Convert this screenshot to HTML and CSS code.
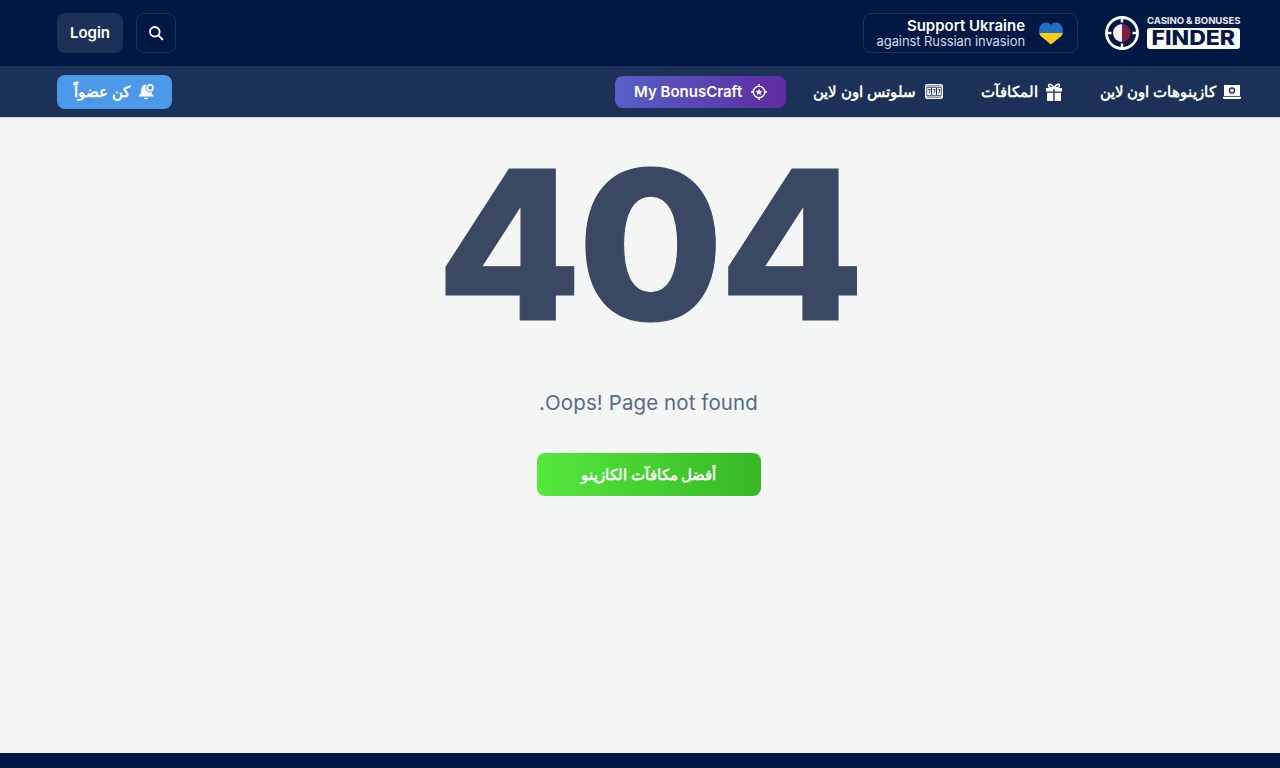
FILE: index.html
```html
<!DOCTYPE html>
<html lang="ar" dir="rtl">
<head>
<meta charset="utf-8">
<title>404</title>
<link rel="stylesheet" href="styles.css">
</head>
<body>
<header class="top">
  <a class="logo" href="#">
    <svg class="logo-mark" viewBox="0 0 34 34" width="34" height="34" aria-hidden="true">
      <circle cx="17" cy="17" r="15.500" fill="none" stroke="#fff" stroke-width="2.800"/>
      <path d="M17 8a9 9 0 0 1 0 18z" fill="#7b1f45"/>
      <path d="M17 8a9 9 0 0 0 0 18z" fill="#f3f0f0"/>
      <path d="M17 1v5.500M17 27.500V33M1 17h5.500M27.500 17H33" stroke="#fff" stroke-width="2.400"/>
    </svg>
    <span class="logo-text">
      <span class="logo-small">CASINO &amp; BONUSES</span>
      <span class="logo-big"><span class="logo-word">FINDER</span></span>
    </span>
  </a>
  <a class="ukraine" href="#">
    <svg class="heart" viewBox="0 0 26 24" width="26" height="24" aria-hidden="true">
      <path d="M1.200 12C.2 6.500 3.500 1.500 8 1.500c2.200 0 3.900 1 5 2.500 1.100-1.500 2.800-2.500 5-2.500 4.500 0 7.800 5 6.800 10.500z" fill="#1f6fc4"/>
      <path d="M1.200 12h23.600c-.4 1.500-1.100 2.500-2 3.500L13 23.500l-9.800-8c-.9-1-1.600-2-2-3.500z" fill="#f8cc1e"/>
    </svg>
    <span class="ukraine-text">
      <b>Support Ukraine</b>
      <span>against Russian invasion</span>
    </span>
  </a>
  <div class="top-actions">
    <button class="icon-btn" aria-label="Search">
      <svg viewBox="0 0 16 16" width="16" height="16" aria-hidden="true"><circle cx="6.800" cy="6.800" r="4.800" fill="none" stroke="#fff" stroke-width="1.900"/><path d="m10.400 10.400 4 4" stroke="#fff" stroke-width="2" stroke-linecap="round"/></svg>
    </button>
    <button class="login">Login</button>
  </div>
</header>
<nav class="nav">
  <a class="nav-item nav-item-first" href="#">
    <svg viewBox="0 0 18 14" width="18" height="14" aria-hidden="true"><path d="M1 0h16v11H1z" fill="#fff"/><circle cx="9" cy="5.500" r="3.200" fill="#1b3157"/><circle cx="9" cy="5.500" r="1.800" fill="#fff"/><path d="M0 11.800h18V13a1 1 0 0 1-1 1H1a1 1 0 0 1-1-1z" fill="#fff"/></svg>
    كازينوهات اون لاين
  </a>
  <a class="nav-item" href="#">
    <svg viewBox="0 0 18 18" width="18" height="18" aria-hidden="true"><path d="M1 5h7.300v3.500H1zM9.700 5H17v3.500H9.700zM2 9.800h6.300V18H2zM9.700 9.800H16V18H9.700z" fill="#fff"/><path d="M9 5C7 1 4 .5 3.500 2.500S6 5 9 5c3 0 6-.5 5.500-2.500S11 1 9 5z" fill="none" stroke="#fff" stroke-width="1.500"/></svg>
    المكافآت
  </a>
  <a class="nav-item nav-item-last" href="#">
    <svg viewBox="0 0 18 15" width="18" height="15" aria-hidden="true"><rect x=".7" y=".7" width="16.600" height="13.600" rx="1.500" fill="none" stroke="#fff" stroke-width="1.400"/><path d="M0 2.800h18M0 12.200h18" stroke="#fff"/><path d="M2.200 4h3.800v7H2.200zM7.100 4h3.800v7H7.100zM12 4h3.800v7H12z" fill="#fff"/><path d="M3 5.600h2.200L4 9.300M7.900 5.600h2.200L8.900 9.300M12.800 5.600H15l-1.200 3.700" fill="none" stroke="#1b3157" stroke-width=".9"/></svg>
    سلوتس اون لاين
  </a>
  <a class="craft" href="#">
    <svg viewBox="0 0 18 18" width="16" height="16" aria-hidden="true"><circle cx="9" cy="9" r="6.500" fill="none" stroke="#fff" stroke-width="1.600"/><path d="M9 0v3.500M9 14.500V18M0 9h3.500M14.500 9H18" stroke="#fff" stroke-width="1.600"/><path d="m9 5.300 1.100 2.400 2.500.3-1.800 1.800.5 2.500-2.300-1.200-2.300 1.200.5-2.500L5.400 8l2.500-.3z" fill="#fff"/></svg>
    <span dir="ltr">My BonusCraft</span>
  </a>
  <a class="join" href="#">
    <svg viewBox="0 0 18 18" width="17" height="17" aria-hidden="true"><path d="M8.500 1.500C4.500 1.500 3.500 4.500 3.500 8c0 2.500-1 3.800-2.300 5v1.300h15V13c-1-1-1.800-2.200-2-4-3 0-5.500-3-5.700-7.500z" fill="#fff"/><path d="M6 15.500h5c-.4 1-1.300 1.600-2.500 1.600S6.400 16.500 6 15.500z" fill="#fff"/><circle cx="12.800" cy="5" r="5" fill="#4b99e8"/><circle cx="12.800" cy="5" r="3.100" fill="#4b99e8" stroke="#fff" stroke-width="1.900"/></svg>
    كن عضواً
  </a>
</nav>
<main class="main">
  <h1 class="code" dir="ltr">404</h1>
  <p class="msg">Oops! Page not found.</p>
  <a class="cta" href="#">أفضل مكافآت الكازينو</a>
</main>
<footer class="foot"></footer>
</body>
</html>
```
FILE: styles.css
```css
* { box-sizing: border-box; }
html, body { margin: 0; height: 100%; }
body {
  display: flex;
  flex-direction: column;
  height: 768px;
  overflow: hidden;
  background: #f4f6f6;
  font-family: Inter, "Noto Sans", sans-serif;
  color: #fff;
}
a { color: inherit; text-decoration: none; }
button { font-family: inherit; color: inherit; cursor: pointer; }

.top {
  flex: none;
  height: 66px;
  background: #001844;
  display: flex;
  align-items: center;
  padding: 0 40px 0 57px;
}
.logo { display: flex; align-items: center; gap: 8px; margin-left: 27px; direction: ltr; }
.logo-mark { display: block; }
.logo-text { display: flex; flex-direction: column; width: 93px; gap: 3px; margin-top: -1px; }
.logo-small { font-size: 9.600px; line-height: 9px; font-weight: 700; letter-spacing: -.1px; white-space: nowrap; color: #e6e9ef; text-align: right; }
.logo-big {
  height: 21px;
  background: #fff;
  color: #001844;
  border-radius: 3px;
  font-size: 20px;
  line-height: 21px;
  font-weight: 800;
  text-align: center;
}
.logo-word { display: inline-block; transform: scaleX(1.15); }
.ukraine {
  display: flex;
  align-items: center;
  gap: 13px;
  width: 215px;
  height: 40px;
  padding: 0 13px;
  border: 1px solid #1b3157;
  border-radius: 8px;
}
.heart { flex: none; }
.ukraine-text { display: flex; flex-direction: column; white-space: nowrap; direction: ltr; align-items: flex-end; }
.ukraine-text b { font-size: 15px; line-height: 16px; font-weight: 600; }
.ukraine-text span { font-size: 13px; line-height: 15px; color: #d4dae5; letter-spacing: -.08px; }
.top-actions { margin-right: auto; display: flex; gap: 13px; align-items: center; }
.icon-btn {
  width: 40px;
  height: 40px;
  padding: 0;
  background: transparent;
  border: 1px solid #1b3157;
  border-radius: 8px;
  display: flex;
  align-items: center;
  justify-content: center;
}
.login {
  width: 66px;
  height: 40px;
  padding: 0 0 2px;
  border: 0;
  border-radius: 8px;
  background: #1b3157;
  font-size: 15px;
  font-weight: 600;
}

.nav {
  flex: none;
  height: 52px;
  background: #1b3157;
  border-bottom: 1px solid #c9d3e0;
  display: flex;
  align-items: center;
  padding: 0 39px 0 57px;
  font-size: 15px;
  font-weight: 600;
}
.nav-item { display: flex; align-items: center; gap: 7px; margin-left: 38px; white-space: nowrap; font-size: 14.800px; }
.nav-item-first { margin-left: 37px; }
.nav-item-last { margin-left: 27px; gap: 9px; }
.craft {
  display: flex;
  align-items: center;
  justify-content: center;
  gap: 9px;
  width: 171px;
  height: 32px;
  border-radius: 8px;
  background: linear-gradient(90deg, #5560c8, #5f2ba0);
}
.join {
  margin-right: auto;
  display: flex;
  align-items: center;
  gap: 8px;
  width: 115px;
  height: 34px;
  justify-content: center;
  border-radius: 8px;
  background: #4b99e8;
}

.main {
  flex: 1;
  display: flex;
  flex-direction: column;
  align-items: center;
  padding: 0 40px 0 57px;
}
.code {
  margin: 0;
  font-size: 208px;
  line-height: 252px;
  font-weight: 800;
  letter-spacing: -4.500px;
  color: #3a4863;
  -webkit-text-stroke: 1px #3a4863;
  transform: scaleX(1.017);
  text-shadow: -.5px 0 0 rgba(205, 135, 85, .4), .5px 0 0 rgba(60, 140, 230, .4);
}
.msg {
  margin: 18px 0 0;
  font-size: 20.500px;
  line-height: 30px;
  letter-spacing: .1px;
  color: #5a6a88;
}
.cta {
  margin-top: 35px;
  width: 224px;
  height: 43px;
  border-radius: 8px;
  background: linear-gradient(90deg, #55e83d, #36b824);
  display: flex;
  align-items: center;
  justify-content: center;
  font-size: 15.400px;
  font-weight: 600;
}
.foot { flex: none; height: 15px; background: #001844; }
```
